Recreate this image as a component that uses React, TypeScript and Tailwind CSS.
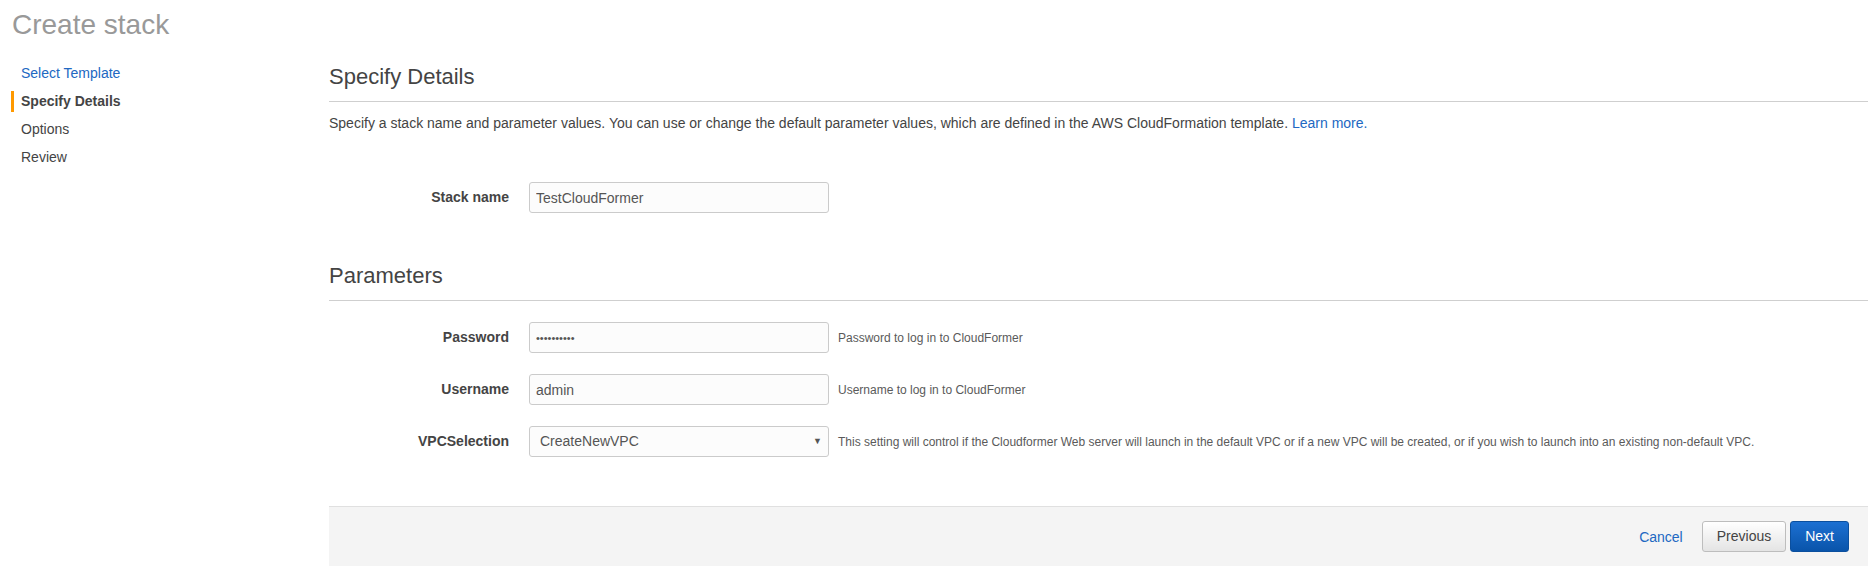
import React from "react";

const steps = [
  { label: "Select Template", state: "link" },
  { label: "Specify Details", state: "active" },
  { label: "Options", state: "todo" },
  { label: "Review", state: "todo" },
];

function Sidebar() {
  return (
    <nav className="w-[329px] shrink-0 pt-[17px]">
      {steps.map((s) => (
        <div key={s.label} className="flex h-[28px] items-center pl-[11px]">
          <div className={s.state === "active" ? "h-[21px] w-[3px] bg-[#f90]" : "h-[21px] w-[3px]"} />
          <span
            className={
              s.state === "link"
                ? "pl-[7px] text-[14px] text-[#2168c2]"
                : s.state === "active"
                ? "pl-[7px] text-[14px] font-bold text-[#444]"
                : "pl-[7px] text-[14px] text-[#444]"
            }
          >
            {s.label}
          </span>
        </div>
      ))}
    </nav>
  );
}

function Field({
  label,
  children,
  help,
  className,
}: {
  label: string;
  children: React.ReactNode;
  help?: string;
  className?: string;
}) {
  return (
    <div className={"flex items-center " + (className ?? "")}>
      <label className="w-[180px] shrink-0 text-right text-[14px] font-bold text-[#444]">{label}</label>
      <div className="ml-[20px] w-[300px] shrink-0">{children}</div>
      {help && <span className="ml-[9px] text-[12px] text-[#5a5a5a]">{help}</span>}
    </div>
  );
}

function TextInput({ value, type = "text" }: { value: string; type?: string }) {
  return (
    <input
      type={type}
      readOnly
      defaultValue={value}
      className={
        type === "password"
          ? "block h-[31px] w-full rounded-[3px] border border-[#cbcbcb] bg-[#fcfcfc] px-[6px] text-[11px] text-[#555] outline-none"
          : "block h-[31px] w-full rounded-[3px] border border-[#cbcbcb] bg-[#fcfcfc] px-[6px] text-[14px] text-[#555] outline-none"
      }
    />
  );
}

export default function App() {
  return (
    <div className="h-[570px] w-[1868px] overflow-hidden bg-white font-['Liberation_Sans',Arial,sans-serif] text-[#444]">
      <h1 className="pl-[12px] pt-[8px] text-[28px] leading-[34px] text-[#999]">Create stack</h1>

      <div className="flex">
        <Sidebar />

        <main className="flex-1 pt-[21px]">
          <h2 className="border-b border-[#cfcfcf] pb-[10px] text-[22px] leading-[28px] text-[#444]">
            Specify Details
          </h2>
          <p className="mt-[11px] text-[14px] leading-[20px] text-[#444]">
            Specify a stack name and parameter values. You can use or change the default parameter values, which are
            defined in the AWS CloudFormation template. <a className="text-[#2168c2]">Learn more.</a>
          </p>

          <Field label="Stack name" className="mt-[49px]">
            <TextInput value="TestCloudFormer" />
          </Field>

          <h2 className="mt-[49px] border-b border-[#cfcfcf] pb-[10px] text-[22px] leading-[28px] text-[#444]">
            Parameters
          </h2>

          <Field label="Password" help="Password to log in to CloudFormer" className="mt-[21px]">
            <TextInput type="password" value="cloudform1" />
          </Field>
          <Field label="Username" help="Username to log in to CloudFormer" className="mt-[21px]">
            <TextInput value="admin" />
          </Field>
          <Field
            label="VPCSelection"
            help="This setting will control if the Cloudformer Web server will launch in the default VPC or if a new VPC will be created, or if you wish to launch into an existing non-default VPC."
            className="mt-[21px]"
          >
            <div className="flex h-[31px] w-full items-center justify-between rounded-[3px] border border-[#cbcbcb] bg-[#fcfcfc] pl-[10px] pr-[6px] text-[14px] text-[#555]">
              <span>CreateNewVPC</span>
              <span className="text-[9px] text-[#555]">▼</span>
            </div>
          </Field>

          <div className="mt-[49px] flex h-[60px] items-start justify-end border-t border-[#e0e0e0] bg-[#f4f4f4] pr-[19px] pt-[14px]">
            <a className="mt-[6px] text-[14px] text-[#2168c2]">Cancel</a>
            <button className="ml-[19px] h-[31px] rounded-[3px] border border-[#bdbdbd] bg-gradient-to-b from-[#ffffff] to-[#e4e4e4] px-[14px] text-[14px] text-[#444]">
              Previous
            </button>
            <button className="ml-[4px] h-[31px] rounded-[3px] border border-[#0b4f9e] bg-gradient-to-b from-[#1c70d2] to-[#0954aa] px-[14px] text-[14px] text-white">
              Next
            </button>
          </div>
        </main>
      </div>
    </div>
  );
}
